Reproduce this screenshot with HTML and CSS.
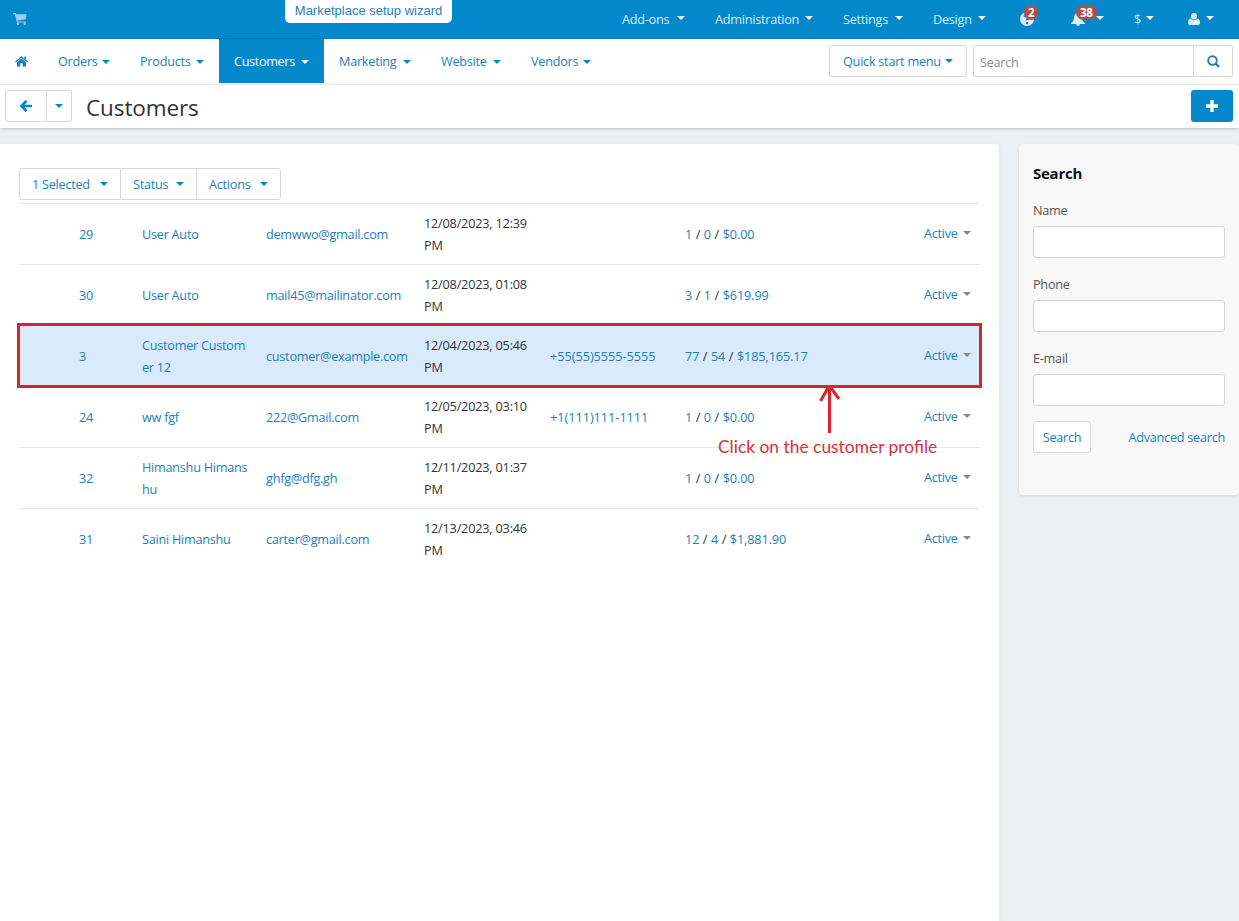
FILE: index.html
```
<!DOCTYPE html>
<html lang="en">
<head>
    <meta charset="UTF-8">
    <meta name="viewport" content="width=device-width, initial-scale=1.0">
    <title>Customers</title>
    <link rel="stylesheet" href="styles.css">
</head>
<body>
    <!-- Top bar -->
    <header class="topbar">
        <a class="cart" href="#">
            <svg width="14" height="12" viewBox="0 0 14 12"><path fill="currentColor" d="M0 0h2.6l.5 1.3H13.6l-.9 5.2L4.6 7.500l.2.9h7.900v1H3.900L2 1.200H0z"/><circle cx="5" cy="10.800" r="1.200" fill="currentColor"/><circle cx="11.700" cy="10.800" r="1.200" fill="currentColor"/></svg>
        </a>
        <a class="wizard" href="#">Marketplace setup wizard</a>
        <nav class="top-menu">
            <a class="top-addons" href="#"><span>Add-ons</span><i class="caret"></i></a>
            <a class="top-admin" href="#"><span>Administration</span><i class="caret"></i></a>
            <a class="top-settings" href="#"><span>Settings</span><i class="caret"></i></a>
            <a class="top-design" href="#"><span>Design</span><i class="caret"></i></a>
            <a class="top-help" href="#">
                <svg width="14" height="14" viewBox="0 0 14 14"><circle cx="7" cy="7" r="7" fill="currentColor"/><path d="M4.500 5Q5 3 7 3q2.400 0 2.400 2Q9.400 6.300 7 7.500v1M7 10v2" fill="none" stroke="#0388cc" stroke-width="2"/></svg>
                <b class="badge">2</b>
            </a>
            <a class="top-bell" href="#">
                <svg width="14" height="14" viewBox="0 0 14 14"><path fill="currentColor" d="M7 0q1 0 1 1.200 3 .8 3 4.300 0 3.500 3 5.500v1H9q-.3 2-2 2t-2-2H0v-1q3-2 3-5.500 0-3.500 3-4.300Q6 0 7 0z"/></svg>
                <b class="badge">38</b>
                <i class="caret"></i>
            </a>
            <a class="top-currency" href="#"><span>$</span><i class="caret"></i></a>
            <a class="top-user" href="#">
                <svg width="12" height="12" viewBox="0 0 12 12"><ellipse cx="6" cy="3.200" rx="3" ry="3.200" fill="currentColor"/><path fill="currentColor" d="M2.500 5.500Q4 7.300 6 7.300t3.500-1.800Q12 6.300 12 10q0 2-2 2H2q-2 0-2-2 0-3.700 2.500-4.500z"/></svg>
                <i class="caret"></i>
            </a>
        </nav>
    </header>

    <!-- Main navigation -->
    <div class="navbar">
        <nav class="main-menu">
            <a class="nav-home" href="#">
                <svg width="13" height="11" viewBox="0 0 13 11"><path fill="currentColor" d="M6.500 2.500l4.500 3.800V10.500H7.700V7.300H5.300v3.200H2V6.300z"/><path fill="none" stroke="currentColor" stroke-width="1.300" d="M.5 6l6-5 6 5"/><path fill="currentColor" d="M9.300.6H11v3.500L9.300 2.700z"/></svg>
            </a>
            <a class="nav-orders" href="#"><span>Orders</span><i class="caret"></i></a>
            <a class="nav-products" href="#"><span>Products</span><i class="caret"></i></a>
            <a class="nav-customers active" href="#"><span>Customers</span><i class="caret"></i></a>
            <a class="nav-marketing" href="#"><span>Marketing</span><i class="caret"></i></a>
            <a class="nav-website" href="#"><span>Website</span><i class="caret"></i></a>
            <a class="nav-vendors" href="#"><span>Vendors</span><i class="caret"></i></a>
        </nav>
        <button class="btn quick-menu"><span>Quick start menu</span><i class="caret"></i></button>
        <div class="nav-search">
            <input type="text" placeholder="Search">
            <button>
                <svg width="13" height="13" viewBox="0 0 13 13"><circle cx="5.500" cy="5.500" r="4.300" fill="none" stroke="currentColor" stroke-width="1.900"/><path d="M8.500 8.500l3.500 3.500" stroke="currentColor" stroke-width="2.200"/></svg>
            </button>
        </div>
    </div>

    <!-- Page title and actions -->
    <div class="actions">
        <div class="btn-group back-group">
            <button class="back">
                <svg width="12" height="12" viewBox="0 0 12 12"><path d="M6.500.8L1.500 6l5 5.200M2 6h10" fill="none" stroke="currentColor" stroke-width="2.700"/></svg>
            </button>
            <button class="back-more"><i class="caret"></i></button>
        </div>
        <h1>Customers</h1>
        <button class="btn-add">
            <svg width="12" height="12" viewBox="0 0 12 12"><path d="M6 0v12M0 6h12" stroke="currentColor" stroke-width="3.400"/></svg>
        </button>
    </div>

    <div class="content">
        <main class="panel">
            <div class="btn-group bulk">
                <button class="bulk-selected"><span>1 Selected</span><i class="caret"></i></button>
                <button class="bulk-status"><span>Status</span><i class="caret"></i></button>
                <button class="bulk-actions"><span>Actions</span><i class="caret"></i></button>
            </div>
            <div class="customers">
                <div class="row">
                    <a href="#">29</a>
                    <a href="#">User Auto</a>
                    <a href="#">demwwo@gmail.com</a>
                    <span class="date">12/08/2023, 12:39<br>PM</span>
                    <span></span>
                    <span class="orders"><a href="#">1</a> / <a href="#">0</a> / <a href="#">$0.00</a></span>
                    <a class="status" href="#">Active<i class="caret"></i></a>
                </div>
                <div class="row">
                    <a href="#">30</a>
                    <a href="#">User Auto</a>
                    <a href="#">mail45@mailinator.com</a>
                    <span class="date">12/08/2023, 01:08<br>PM</span>
                    <span></span>
                    <span class="orders"><a href="#">3</a> / <a href="#">1</a> / <a href="#">$619.99</a></span>
                    <a class="status" href="#">Active<i class="caret"></i></a>
                </div>
                <div class="row selected">
                    <a href="#">3</a>
                    <a href="#">Customer Custom<br>er 12</a>
                    <a href="#">customer@example.com</a>
                    <span class="date">12/04/2023, 05:46<br>PM</span>
                    <a class="phone" href="#">+55(55)5555-5555</a>
                    <span class="orders"><a href="#">77</a> / <a href="#">54</a> / <a href="#">$185,165.17</a></span>
                    <a class="status" href="#">Active<i class="caret"></i></a>
                    <!-- Callout pointing at the row -->
                    <div class="callout">
                        <svg width="24" height="49" viewBox="0 0 24 49"><path d="M12.500 48V2M3.500 16L11 3q1.500-2.500 3 0l8 11" fill="none" stroke="#e0222f" stroke-width="3"/></svg>
                        <p>Click on the customer profile</p>
                    </div>
                </div>
                <div class="row">
                    <a href="#">24</a>
                    <a href="#">ww fgf</a>
                    <a href="#">222@Gmail.com</a>
                    <span class="date">12/05/2023, 03:10<br>PM</span>
                    <a class="phone" href="#">+1(111)111-1111</a>
                    <span class="orders"><a href="#">1</a> / <a href="#">0</a> / <a href="#">$0.00</a></span>
                    <a class="status" href="#">Active<i class="caret"></i></a>
                </div>
                <div class="row">
                    <a href="#">32</a>
                    <a href="#">Himanshu Himans<br>hu</a>
                    <a href="#">ghfg@dfg.gh</a>
                    <span class="date">12/11/2023, 01:37<br>PM</span>
                    <span></span>
                    <span class="orders"><a href="#">1</a> / <a href="#">0</a> / <a href="#">$0.00</a></span>
                    <a class="status" href="#">Active<i class="caret"></i></a>
                </div>
                <div class="row">
                    <a href="#">31</a>
                    <a href="#">Saini Himanshu</a>
                    <a href="#">carter@gmail.com</a>
                    <span class="date">12/13/2023, 03:46<br>PM</span>
                    <span></span>
                    <span class="orders"><a href="#">12</a> / <a href="#">4</a> / <a href="#">$1,881.90</a></span>
                    <a class="status" href="#">Active<i class="caret"></i></a>
                </div>
            </div>
        </main>

        <!-- Search sidebar -->
        <aside class="sidebar">
            <h2>Search</h2>
            <label for="name">Name</label>
            <input type="text" id="name">
            <label for="phone">Phone</label>
            <input type="text" id="phone">
            <label for="email">E-mail</label>
            <input type="text" id="email">
            <div class="sidebar-buttons">
                <button class="btn">Search</button>
                <a href="#">Advanced search</a>
            </div>
        </aside>
    </div>
</body>
</html>
```
FILE: styles.css
```
* {
    box-sizing: border-box;
}
body {
    margin: 0;
    height: 100vh;
    overflow: hidden;
    display: flex;
    flex-direction: column;
    background-color: #ecf0f3;
    font-family: "Open Sans", "Noto Sans", sans-serif;
    font-size: 12.7px;
    line-height: 22px;
    letter-spacing: -0.26px;
    color: #333;
}
a {
    color: #1f7dba;
    text-decoration: none;
}
button, input {
    font: inherit;
    letter-spacing: inherit;
    padding: 0;
    margin: 0;
}
button {
    color: #1f7dba;
    background-color: white;
    border: 1px solid #d3d9df;
    display: flex;
    align-items: center;
    justify-content: center;
    cursor: pointer;
}
input {
    border: 1px solid #d0d5da;
    border-radius: 3px;
    background-color: white;
    outline: none;
}
svg {
    display: block;
    flex: none;
}
.caret {
    width: 0;
    height: 0;
    flex: none;
    border: 4px solid transparent;
    border-top-color: #0388cc;
    border-bottom: 0;
}

/* Top bar */
.topbar {
    height: 39px;
    flex: none;
    display: flex;
    align-items: center;
    background-color: #0388cc;
    border-bottom: 1px solid #087ab6;
}
.topbar a {
    color: #d9edf8;
}
.cart {
    margin-left: 13px;
    width: 272px;
    opacity: 0.7;
}
.topbar .wizard {
    align-self: flex-start;
    width: 167px;
    height: 23px;
    text-align: center;
    background-color: white;
    color: #2b80b9;
    border-radius: 0 0 5px 5px;
    font-family: "Liberation Sans", Arial, sans-serif;
    font-size: 13px;
    letter-spacing: 0;
}
.top-menu {
    margin-left: auto;
    margin-right: 25px;
    display: flex;
}
.top-menu a {
    display: flex;
    align-items: center;
    justify-content: space-between;
    position: relative;
    height: 38px;
    margin-left: 30px;
}
.top-menu .caret {
    border-top-color: white;
    margin-top: -2px;
}
.top-menu .top-addons { width: 63px; }
.top-menu .top-admin { width: 98px; }
.top-menu .top-settings { width: 60px; }
.top-menu .top-design { width: 53px; }
.top-menu .top-help { width: 20px; margin-left: 34px; }
.top-menu .top-bell { width: 33px; margin-left: 31px; }
.top-menu .top-currency { width: 20px; }
.top-menu .top-user { width: 26px; margin-left: 34px; }
.badge {
    position: absolute;
    top: 5px;
    left: 4px;
    padding: 0 4px;
    border-radius: 8px;
    background-color: #b94a48;
    color: white;
    font-size: 11.5px;
    line-height: 15px;
}
.top-bell .badge {
    left: 5px;
}

/* Main navigation */
.navbar {
    height: 46px;
    flex: none;
    display: flex;
    align-items: flex-start;
    background-color: white;
    border-bottom: 1px solid #f0f0f1;
}
.main-menu {
    display: flex;
}
.main-menu a {
    height: 44px;
    padding: 0 15px;
    display: flex;
    align-items: center;
    justify-content: space-between;
}
.main-menu .caret {
    margin-top: 2px;
}
.main-menu .nav-home { width: 43px; }
.main-menu .nav-orders { width: 82px; }
.main-menu .nav-products { width: 94px; }
.main-menu .nav-customers { width: 105px; letter-spacing: -0.36px; }
.main-menu .nav-marketing { width: 102px; }
.main-menu .nav-website { width: 90px; }
.main-menu .nav-vendors { width: 90px; }
.main-menu .active {
    background-color: #0388cc;
    color: white;
}
.main-menu .active .caret {
    border-top-color: white;
}
.btn {
    height: 32px;
    border-radius: 3px;
}
.quick-menu {
    width: 138px;
    margin: 6px 6px 0 auto;
    padding: 0 13px;
    justify-content: space-between;
}
.nav-search {
    display: flex;
    width: 260px;
    height: 32px;
    margin: 6px 6px 0 0;
}
.nav-search input {
    width: 221px;
    padding: 2px 6px 0;
    border-color: #d3d9df;
    border-radius: 3px 0 0 3px;
}
.nav-search input::placeholder {
    color: #8b8b8b;
}
.nav-search button {
    width: 39px;
    border-left: 0;
    border-radius: 0 3px 3px 0;
}

/* Title row */
.actions {
    height: 43px;
    flex: none;
    display: flex;
    align-items: center;
    padding: 0 6px 2px 5px;
    background-color: white;
    box-shadow: 0 1px 3px rgba(0, 0, 0, 0.2);
}
.actions h1 {
    margin: 5px 0 0 14px;
    font-size: 22.5px;
    font-weight: normal;
    letter-spacing: -0.1px;
}
.btn-group {
    display: flex;
}
.btn-group button {
    height: 32px;
}
.btn-group button + button {
    border-left: 0;
}
.btn-group button:first-child {
    border-radius: 3px 0 0 3px;
}
.btn-group button:last-child {
    border-radius: 0 3px 3px 0;
}
.btn-group .back { width: 42px; color: #0388cc; }
.btn-group .back-more { width: 25px; }
.btn-add {
    width: 42px;
    height: 32px;
    margin-left: auto;
    border: 0;
    border-radius: 3px;
    background-color: #0388cc;
    color: white;
}

/* Content */
.content {
    flex: 1;
    display: flex;
    align-items: flex-start;
    gap: 20px;
    margin-top: 16px;
}
.panel {
    width: 999px;
    align-self: stretch;
    padding: 24px 20px 0 19px;
    background-color: white;
    border-radius: 0 4px 0 0;
    box-shadow: 0 1px 3px rgba(0, 0, 0, 0.1);
}
.bulk {
    margin-bottom: 3px;
}
.bulk button {
    justify-content: space-between;
    padding: 0 12px;
}
.bulk .bulk-selected { width: 102px; }
.bulk .bulk-status { width: 76px; }
.bulk .bulk-actions { width: 84px; }

/* Customers list */
.row {
    display: grid;
    grid-template-columns: 63px 124px 158px 126px 135px 1fr 47px;
    align-items: center;
    position: relative;
    height: 61px;
    padding: 0 8px 0 60px;
    border-top: 1px solid #e7e8e9;
    white-space: nowrap;
}
.date {
    letter-spacing: -0.2px;
}
.phone {
    letter-spacing: -0.02px;
}
.orders {
    letter-spacing: -0.12px;
    word-spacing: 0.4px;
}
.status {
    display: flex;
    align-items: center;
    justify-content: space-between;
    margin-top: -2px;
}
.status .caret {
    border-top-color: #85898d;
}
.row.selected {
    margin-right: -1px;
    padding-right: 9px;
    background-color: #d9eafc;
    outline: 3px solid #d9232e;
    outline-offset: -1px;
    z-index: 1;
}
.callout {
    position: absolute;
    top: 59px;
    left: 699px;
    color: #d8323b;
}
.callout svg {
    margin-left: 99px;
}
.callout p {
    margin: 1px 0 0;
    font-family: Lato, sans-serif;
    font-size: 17.4px;
    line-height: 24px;
    letter-spacing: 0;
}

/* Search sidebar */
.sidebar {
    flex: 1;
    height: 351px;
    padding: 18px 14px 0;
    background-color: #f8f8f8;
    border-radius: 4px;
    box-shadow: 0 1px 3px rgba(0, 0, 0, 0.1);
}
.sidebar h2 {
    margin: 0 0 15px;
    font-size: 15px;
    line-height: 22px;
    color: #111;
}
.sidebar label {
    display: block;
    height: 27px;
    color: #555;
}
.sidebar input {
    display: block;
    width: 100%;
    height: 32px;
    margin-bottom: 15px;
}
.sidebar-buttons {
    display: flex;
    align-items: center;
    justify-content: space-between;
}
.sidebar-buttons .btn {
    width: 58px;
}
```
